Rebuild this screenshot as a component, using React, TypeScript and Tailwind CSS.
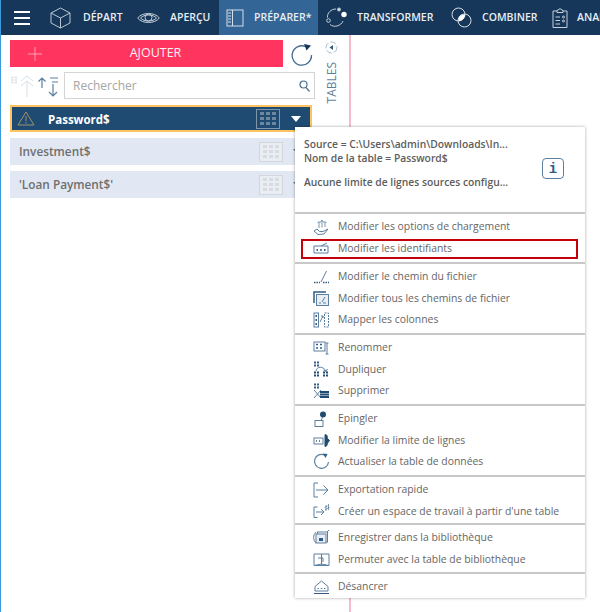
import type { ReactNode } from "react";

const NAVY = "#17375a";
const ICON = "#5b7f9f";
const DARK = "#1f4b73";

function Svg({ w = 16, h = 16, children }: { w?: number; h?: number; children: ReactNode }) {
  return (
    <svg width={w} height={h} viewBox={`0 0 ${w} ${h}`} fill="none" stroke={ICON} strokeWidth="1">
      {children}
    </svg>
  );
}

const Cube = () => (
  <svg width="21" height="22" viewBox="0 0 21 22" fill="none" stroke="#b9c6d2" strokeWidth="1">
    <path d="M10.5 1 L20 6 V16 L10.5 21 L1 16 V6 Z M1 6 L10.5 11 L20 6 M10.5 11 V21" />
  </svg>
);
const Eye = () => (
  <svg width="23" height="14" viewBox="0 0 23 14" fill="none" stroke="#c4d0da" strokeWidth="1">
    <path d="M.7 7 C5 1 18 1 22.3 7 C18 13 5 13 .7 7 Z" />
    <path d="M3.5 7 C7 3 16 3 19.5 7 C16 11 7 11 3.5 7 Z" />
    <circle cx="11.5" cy="6.5" r="3.5" />
  </svg>
);
const Book = () => (
  <svg width="18" height="18" viewBox="0 0 18 18" fill="none" stroke="#d5dfe8" strokeWidth="1">
    <rect x="1" y="1" width="16" height="16" />
    <path d="M6.5 1 V17 M2 4 H5 M2 7 H5 M2 10 H5 M2 13 H5" />
  </svg>
);
const Transform = () => (
  <svg width="22" height="21" viewBox="0 0 22 21" fill="none" stroke="#c4d0da" strokeWidth="1">
    <path d="M2.5 10.500 C2 6 6 2 11 2 M18 14 C16 19 9 21 5 17.500" />
    <circle cx="14" cy="2.500" r="1.500" fill="#c4d0da" />
    <circle cx="19" cy="7.500" r="2.700" fill="#fff" stroke="none" />
    <circle cx="3.500" cy="13.500" r="1.800" />
  </svg>
);
const Combine = () => (
  <svg width="21" height="21" viewBox="0 0 21 21" fill="none" stroke="#d5dfe8" strokeWidth="1">
    <circle cx="7.500" cy="7.500" r="6.500" />
    <circle cx="13.500" cy="13.500" r="6.500" />
    <path d="M7.500 14 C7 10 10 7 14 7.500 C14 11 11 14 7.500 14 Z" fill="#fff" stroke="none" />
  </svg>
);
const Clipboard = () => (
  <svg width="16" height="20" viewBox="0 0 16 20" fill="none" stroke="#c4d0da" strokeWidth="1">
    <path d="M5 3 H1 V19.500 H15 V3 H11 M5 4.500 V2.500 L8 .7 L11 2.500 V4.500 Z" />
    <path d="M3.500 9 H8 M3.500 12.500 H8 M3.500 16 H8" />
    <circle cx="11.500" cy="9" r="1" />
    <circle cx="11.500" cy="13" r="1" />
  </svg>
);

function NavItem({ icon, label, box, gap }: { icon: ReactNode; label: string; box: string; gap: string }) {
  return (
    <div className={`flex h-full shrink-0 items-center ${box}`}>
      <span className={`flex shrink-0 items-center ${gap}`}>{icon}</span>
      <span className="whitespace-nowrap text-[10.500px] font-semibold text-[#e8eef3]">{label}</span>
    </div>
  );
}

const GridIcon = ({ color, cell, bg }: { color: string; cell: string; bg: string }) => (
  <span className="flex h-[20px] w-[24px] flex-col justify-center gap-[2px] border px-[3px]" style={{ borderColor: color, background: bg }}>
    {[0, 1, 2].map((r) => (
      <span key={r} className="flex gap-[2px]">
        {[0, 1, 2].map((c) => (
          <span key={c} className="h-[3px] flex-1" style={{ background: cell }} />
        ))}
      </span>
    ))}
  </span>
);

function TableRow({ label }: { label: string }) {
  return (
    <div className="mt-[6px] flex h-[27px] items-center justify-between bg-[#e1e8f4] pl-[9px]">
      <span className="text-[11.800px] font-semibold text-[#6f6f6f]">{label}</span>
      <span className="mr-[9px] flex items-center">
        <GridIcon color="#d3d7dc" cell="#d8dce2" bg="#e9edf4" />
        <span className="ml-[10px] h-0 w-0 border-x-[5px] border-t-[6px] border-x-transparent border-t-[#5b7f9f]" />
      </span>
    </div>
  );
}

const ic = {
  load: (
    <Svg w={16} h={16}>
      <path d="M1 12 L4 10 L6.500 12.500 L10 12.500 L15 10 M1 12 L5 15.500 L11 15 L15 10" />
      <path d="M6 9 V3 M9 8.500 V1.500 M12 8 V3 M4.500 4 L6 2.500 L7.500 4 M7.500 3 L9 1 L10.500 3 M10.500 4 L12 2.500 L13.500 4" strokeWidth=".8" />
    </Svg>
  ),
  ids: (
    <Svg w={16} h={12}>
      <path d="M1 4 H15 V11 H1 Z M8 4 L14 1" />
      <path d="M3.500 8 H5 M7.200 8 H8.700 M11 8 H12.500" stroke="#2f5c85" strokeWidth="2" />
    </Svg>
  ),
  path: (
    <Svg w={16} h={14}>
      <path d="M8 12 L13.500 1" />
      <path d="M1 12.500 H7 M10 12.500 H16" stroke="#2f5c85" strokeWidth="1.500" strokeDasharray="1.500 1" />
    </Svg>
  ),
  paths: (
    <Svg w={16} h={15}>
      <path d="M1 12 V1 H13" stroke="#2f5c85" strokeWidth="1.500" />
      <rect x="3.500" y="3.500" width="12" height="11" fill="#e8eef3" />
      <path d="M9 11 L12 6 M6 12 H8 M10 12 H13" />
    </Svg>
  ),
  map: (
    <Svg w={16} h={16}>
      <rect x="1" y="1" width="4.500" height="14" />
      <path d="M3.200 3 V5 M3.200 7 V9 M3.200 11 V13" stroke="#2f5c85" strokeWidth="1.500" />
      <rect x="11.500" y="1" width="4" height="14" strokeDasharray="2 1" />
      <path d="M7 10 L10 4 M8 4 H10 V6" />
    </Svg>
  ),
  rename: (
    <Svg w={17} h={14}>
      <rect x="1" y="1" width="11" height="9" />
      <path d="M3 3.500 H5 M7 3.500 H9 M3 7 H5 M7 7 H9" stroke="#2f5c85" strokeWidth="1.500" />
      <path d="M14 2 V13 M12.500 2 H15.500 M12.500 13 H15.500" />
    </Svg>
  ),
  dup: (
    <Svg w={16} h={16}>
      <path d="M1 1.500 H6 M1 4.500 H6" stroke="#3b6285" strokeWidth="2" strokeDasharray="2 1" />
      <path d="M3 10 C4 5 10 5 13 10" />
      <path d="M10.500 9 L13 10.500 L14.500 8" />
      <path d="M1 11.500 H6 M1 14.500 H6 M10 11.500 H15 M10 14.500 H15" stroke={DARK} strokeWidth="2" strokeDasharray="2 1" />
    </Svg>
  ),
  del: (
    <Svg w={17} h={16}>
      <path d="M1 1.500 H6 M1 4.500 H6" stroke="#3b6285" strokeWidth="2" strokeDasharray="2 1" />
      <path d="M1 7 L8 15 M1 15 L8 7" />
      <path d="M7 9 H16 M7 11.500 H16 M7 14 H16" stroke={DARK} strokeWidth="2" />
    </Svg>
  ),
  pin: (
    <Svg w={14} h={16}>
      <circle cx="9" cy="3.500" r="3" fill={DARK} stroke="none" />
      <path d="M8.500 6 L7 10" />
      <rect x="1" y="9.500" width="8" height="6" />
    </Svg>
  ),
  limit: (
    <Svg w={17} h={13}>
      <rect x="1" y="4" width="9" height="6" />
      <path d="M3 7 H4 M6 7 H7" stroke="#2f5c85" strokeWidth="1.500" />
      <path d="M12 .7 C15 .7 14 3 14.500 4.500 L16.500 6.500 L14.500 9 C14 11 14 12.500 12 12.500 Z" fill={DARK} stroke={DARK} />
    </Svg>
  ),
  refresh: (
    <svg width="17" height="17" viewBox="0 0 17 17" fill="none" stroke={ICON} strokeWidth="1.200">
      <path d="M11.500 2 A7 7 0 1 0 15.500 9" />
      <path d="M10 .5 L14.500 1 L12.500 5 Z" fill="#2f5c85" stroke="none" />
    </svg>
  ),
  exp: (
    <Svg w={16} h={16}>
      <path d="M5 1 H1 V15 H5 M3 8 H15 M10.500 3.500 L15 8 L10.500 12.500" />
    </Svg>
  ),
  workspace: (
    <Svg w={17} h={14}>
      <path d="M4.500 3 H1 V13.500 H4.500 M3 8 H11 M8 5 L11 8 L8 11" />
      <path d="M13 1 V7 M15.500 0 V6 M11.500 3.500 L14.500 2 M12 5.500 L16.500 3.500" strokeWidth=".8" />
    </Svg>
  ),
  save: (
    <Svg w={17} h={17}>
      <path d="M3 3 A7.500 7.500 0 0 0 3 14 M14 3 L16 1" />
      <rect x="4.500" y="3" width="10" height="10" />
      <rect x="3" y="5" width="10" height="9" fill="#e8eef3" />
      <rect x="6" y="9" width="4" height="3" fill="#2f5c85" stroke="none" />
    </Svg>
  ),
  swap: (
    <Svg w={17} h={15}>
      <path d="M1 2 H8.500 V13.500 H1 Z M8.500 2 H16 V13.500 H8.500 M1 13.500 L8.500 12 L16 13.500" />
      <path d="M5 6 H10 V10" />
    </Svg>
  ),
  unanchor: (
    <Svg w={15} h={14}>
      <path d="M1 6.500 L7.500 1 L14 6.500 M1 6.500 V11 H14 V6.500" />
      <path d="M3.500 8.500 H5 M6.800 8.500 H8.300 M10 8.500 H11.500" />
      <path d="M0 13.500 H15" stroke="#2f5c85" />
    </Svg>
  ),
};

type Item = { icon: ReactNode; label: string; marked?: boolean };

const SECTIONS: { height: string; items: Item[] }[] = [
  {
    height: "h-[50px]",
    items: [
      { icon: ic.load, label: "Modifier les options de chargement" },
      { icon: ic.ids, label: "Modifier les identifiants", marked: true },
    ],
  },
  {
    height: "h-[71px]",
    items: [
      { icon: ic.path, label: "Modifier le chemin du fichier" },
      { icon: ic.paths, label: "Modifier tous les chemins de fichier" },
      { icon: ic.map, label: "Mapper les colonnes" },
    ],
  },
  {
    height: "h-[71px]",
    items: [
      { icon: ic.rename, label: "Renommer" },
      { icon: ic.dup, label: "Dupliquer" },
      { icon: ic.del, label: "Supprimer" },
    ],
  },
  {
    height: "h-[71px]",
    items: [
      { icon: ic.pin, label: "Epingler" },
      { icon: ic.limit, label: "Modifier la limite de lignes" },
      { icon: ic.refresh, label: "Actualiser la table de données" },
    ],
  },
  {
    height: "h-[48px]",
    items: [
      { icon: ic.exp, label: "Exportation rapide" },
      { icon: ic.workspace, label: "Créer un espace de travail à partir d'une table" },
    ],
  },
  {
    height: "h-[49px]",
    items: [
      { icon: ic.save, label: "Enregistrer dans la bibliothèque" },
      { icon: ic.swap, label: "Permuter avec la table de bibliothèque" },
    ],
  },
  { height: "h-[26px]", items: [{ icon: ic.unanchor, label: "Désancrer" }] },
];

function ContextMenu() {
  return (
    <div className="absolute left-[294px] top-[127px] w-[290px] bg-white shadow-[0_0_3px_rgba(0,0,0,0.35)]">
      <div className="relative h-[85px] pl-[9px] pt-[10px] text-[10.300px] font-semibold leading-[14px] text-[#5c5c5c]">
        <div>Source = C:\Users\admin\Downloads\In...</div>
        <div>Nom de la table = Password$</div>
        <div className="mt-[10px]">Aucune limite de lignes sources configu...</div>
        <div className="absolute left-[247px] top-[31px] flex h-[21px] w-[22px] items-center justify-center rounded-[4px] border border-[#5b7f9f] font-['Liberation_Mono',monospace] text-[14px] font-bold text-[#2f5c85]">
          i
        </div>
      </div>
      {SECTIONS.map((section, i) => (
        <div key={i} className={`border-t-2 border-[#c8c8c8] pt-[2px] ${section.height}`}>
          {section.items.map((it) => (
            <div key={it.label} className="relative flex h-[21.500px] items-center pl-[43px]">
              <span className="absolute left-[17px] top-0 flex h-full w-[18px] items-center justify-center">{it.icon}</span>
              {it.marked && <span className="absolute bottom-0 left-[6px] right-[7px] top-[1.500px] border-2 border-[#c5000b]" />}
              <span className="pt-[1px] text-[10.400px] text-[#666666]">{it.label}</span>
            </div>
          ))}
        </div>
      ))}
    </div>
  );
}

export default function App() {
  return (
    <div className="relative h-[612px] w-[600px] overflow-hidden border-l border-[#3a9ad9] bg-white font-['Open_Sans',sans-serif]">
      <nav className="flex h-[35px] items-center overflow-hidden" style={{ background: NAVY }}>
        <div className="ml-[13px] mr-[20px] flex w-[16px] shrink-0 flex-col gap-[4px]">
          <span className="h-[2px] bg-white" />
          <span className="h-[2px] bg-white" />
          <span className="h-[2px] bg-white" />
        </div>
        <NavItem icon={<Cube />} label="DÉPART" box="w-[87px]" gap="mr-[12px]" />
        <NavItem icon={<Eye />} label="APERÇU" box="w-[82px]" gap="mr-[10px]" />
        <NavItem icon={<Book />} label="PRÉPARER*" box="w-[99px] bg-[#336596] pl-[7px]" gap="mr-[10px]" />
        <NavItem icon={<Transform />} label="TRANSFORMER" box="w-[132px] pl-[7px]" gap="mr-[10px]" />
        <NavItem icon={<Combine />} label="COMBINER" box="w-[102px] pl-[1px]" gap="mr-[10px]" />
        <NavItem icon={<Clipboard />} label="ANALYSER" box="w-[100px]" gap="mr-[9px]" />
      </nav>

      <div className="flex h-[577px]">
        <div className="flex h-full w-[350px] shrink-0 border-r-2 border-[#f7bccb]">
          <div className="w-[311px] shrink-0 pl-[9px] pt-[5px]">
            <div className="flex items-start">
              <button className="relative flex h-[27px] w-[273px] shrink-0 items-center justify-center bg-[#ff3560] pl-[18px] text-[12.500px] text-[#fff0f3]">
                <svg width="14" height="14" viewBox="0 0 14 14" stroke="#ff9db2" strokeWidth="1" className="absolute left-[18px]">
                  <path d="M7 0 V14 M0 7 H14" />
                </svg>
                AJOUTER
              </button>
              <svg width="22" height="23" viewBox="0 0 22 23" fill="none" stroke="#436b90" strokeWidth="1.300" className="ml-[8px] mt-[4px] shrink-0">
                <path d="M14.500 2.500 A9.700 9.700 0 1 0 20.500 11" />
                <path d="M13 0 L20 1.500 L15.500 6.500 Z" fill={NAVY} stroke="none" />
              </svg>
            </div>
            <div className="mt-[5px] flex h-[27px] w-[305px] items-center">
              <svg width="50" height="24" viewBox="0 0 50 24" fill="none" className="mr-[4px] shrink-0">
                <path d="M1 3.500 H7 M1 6 H7 M1 8.500 H7" stroke="#d6dfe7" strokeWidth="1.500" strokeDasharray="2.500 1" />
                <path d="M11 7 L17 2 L23 7 M11 12 L17 7 L23 12 M17 8 V23" stroke="#d6dfe7" />
                <path d="M32 14 V4 M28.500 7.500 L32 4 L35.500 7.500 M43 10 V22 M39 18 L43 22 L47 18 M40 4 H48 M42 8 H48" stroke="#5b7f9f" strokeWidth="1.200" />
              </svg>
              <div className="flex h-[27px] min-w-0 flex-1 items-center justify-between border border-[#d4d4d4] pl-[8px] pr-[4px]">
                <span className="text-[12px] text-[#a5a5a5]">Rechercher</span>
                <svg width="11" height="12" viewBox="0 0 11 12" fill="none" stroke="#4b7193" strokeWidth="1.200">
                  <circle cx="4.500" cy="4.500" r="3.500" />
                  <path d="M7 7.500 L10.500 11.500" />
                </svg>
              </div>
            </div>
            <div className="mt-[6px] flex h-[27px] items-center justify-between border-2 border-[#fcc35e] bg-[#1f4b73] pl-[5px]">
              <div className="flex items-center">
                <svg width="18" height="15" viewBox="0 0 18 15" fill="none" stroke="#a1926d" strokeWidth="1" className="shrink-0">
                  <path d="M9 1 L17 14 H1 Z M9 5 V10 M9 11 V12.500" />
                </svg>
                <span className="ml-[13px] mt-[2px] text-[11.500px] font-bold text-white">Password$</span>
              </div>
              <div className="mr-[9px] flex items-center">
                <GridIcon color="#7f95a9" cell="#6d879e" bg="#1f4b73" />
                <span className="ml-[11px] h-0 w-0 border-x-[5px] border-t-[6px] border-x-transparent border-t-white" />
              </div>
            </div>
            <TableRow label="Investment$" />
            <TableRow label="'Loan Payment$'" />
          </div>
          <div className="flex w-[37px] flex-col items-center pl-[2px] pt-[6px]">
            <svg width="13" height="13" viewBox="0 0 13 13" fill="none" stroke="#a9bccd" strokeWidth="1" strokeDasharray="6 2">
              <circle cx="6.500" cy="6.500" r="5.500" />
              <path d="M8 4 L4.500 6.500 L8 9 Z" fill="#2f5c85" stroke="none" />
            </svg>
            <span className="mt-[8px] rotate-180 text-[12px] leading-[14px] text-[#5f7f9c] [writing-mode:vertical-rl]">TABLES</span>
          </div>
        </div>
      </div>
      <ContextMenu />
    </div>
  );
}
